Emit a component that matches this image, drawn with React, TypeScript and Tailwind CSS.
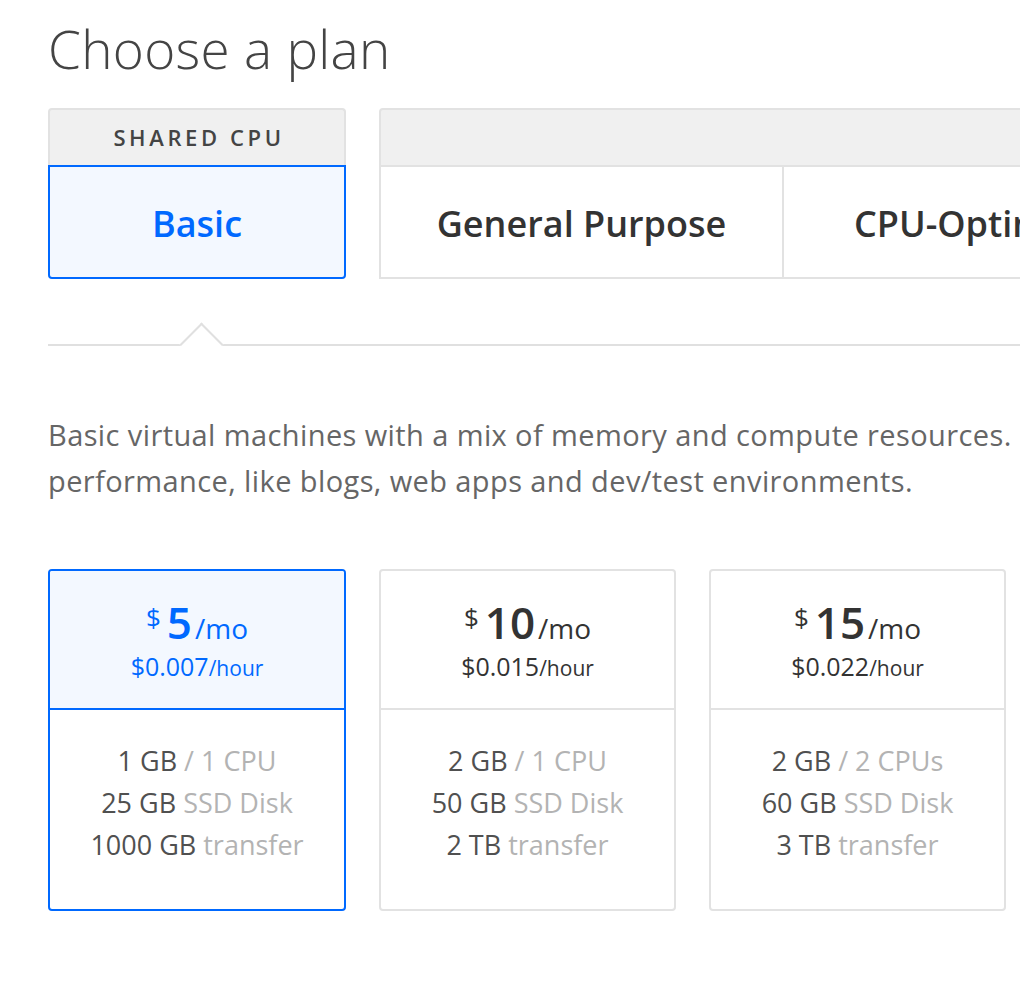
import React from "react";

const plans = [
  { price: "5", hour: "0.007", mem: "1 GB", cpu: "1 CPU", disk: "25 GB", transfer: "1000 GB", active: true },
  { price: "10", hour: "0.015", mem: "2 GB", cpu: "1 CPU", disk: "50 GB", transfer: "2 TB", active: false },
  { price: "15", hour: "0.022", mem: "2 GB", cpu: "2 CPUs", disk: "60 GB", transfer: "3 TB", active: false },
];

export default function App() {
  return (
    <div
      className="w-[1020px] h-[982px] overflow-hidden bg-white"
      style={{ fontFamily: "'Open Sans', Lato, sans-serif" }}
    >
      <div className="w-[1700px] pl-12">
        <h1 className="pt-[19px] text-[53px] leading-[60px] font-light text-[#444] tracking-[0.3px]">Choose a plan</h1>

        <div className="mt-[29px] flex gap-[33px]">
          <div className="w-[298px] flex flex-col">
            <div className="h-[57px] bg-[#f0f0f0] border-2 border-b-0 border-[#e2e2e2] rounded-t-[4px] flex items-center justify-center pl-[4px] text-[22px] font-semibold tracking-[3.6px] text-[#444]">
              SHARED CPU
            </div>
            <div className="h-[114px] bg-[#f3f8ff] border-2 border-[#0069ff] rounded-b-[4px] flex items-center justify-center pt-[3px] text-[36px] font-semibold text-[#0069ff]">
              Basic
            </div>
          </div>
          <div className="w-[1200px] flex flex-col">
            <div className="h-[57px] bg-[#f0f0f0] border-2 border-b-0 border-[#e2e2e2] rounded-tl-[4px]" />
            <div className="h-[114px] border-2 border-[#e2e2e2] flex">
              <div className="w-[403px] border-r-2 border-[#e2e2e2] flex items-center justify-center pt-[3px] text-[36px] font-semibold text-[#333]">
                General Purpose
              </div>
              <div className="w-[405px] border-r-2 border-[#e2e2e2] flex items-center justify-center pt-[3px] text-[36px] font-semibold text-[#333]">
                CPU-Optimized
              </div>
            </div>
          </div>
        </div>

        <div className="relative mt-[65px] w-[972px] h-[2px] bg-[#e0e0e0]">
          <div className="absolute left-[138px] top-[-15px] w-[31px] h-[31px] rotate-45 bg-white border-t-2 border-l-2 border-[#e0e0e0]" />
        </div>

        <p className="mt-[66px] text-[29px] leading-[46px] tracking-[0.4px] text-[#666] whitespace-nowrap">
          Basic virtual machines with a mix of memory and compute resources. Best for small projects that can handle variable levels of CPU
          <br />
          performance, like blogs, web apps and dev/test environments.
        </p>

        <div className="mt-[65px] flex gap-[33px]">
          {plans.map((p) => (
            <div
              key={p.price}
              className={
                p.active
                  ? "w-[298px] h-[342px] border-2 border-[#0069ff] rounded-[4px] flex flex-col overflow-hidden"
                  : "w-[297px] h-[342px] border-2 border-[#e2e2e2] rounded-[4px] flex flex-col overflow-hidden"
              }
            >
              <div
                className={
                  p.active
                    ? "h-[139px] bg-[#f3f8ff] border-b-2 border-[#0069ff] flex flex-col items-center justify-center text-[#0069ff]"
                    : "h-[139px] border-b-2 border-[#e2e2e2] flex flex-col items-center justify-center text-[#333]"
                }
              >
                <div className="flex items-baseline leading-none">
                  <span className="text-[26px] self-start mt-[4px] mr-[6px]">$</span>
                  <span className="text-[44px] font-semibold">{p.price}</span>
                  <span className="text-[28px] ml-[3px]">/mo</span>
                </div>
                <div className="mt-[10px] leading-none">
                  <span className="text-[25px]">${p.hour}</span>
                  <span className="text-[21px]">/hour</span>
                </div>
              </div>
              <div className="flex-1 pt-[30px] flex flex-col items-center text-[27px] leading-[42px] text-[#505050]">
                <div>
                  {p.mem} <span className="text-[#b3b3b3]">/ {p.cpu}</span>
                </div>
                <div>
                  {p.disk} <span className="text-[#b3b3b3]">SSD Disk</span>
                </div>
                <div>
                  {p.transfer} <span className="text-[#b3b3b3]">transfer</span>
                </div>
              </div>
            </div>
          ))}
        </div>
      </div>
    </div>
  );
}
